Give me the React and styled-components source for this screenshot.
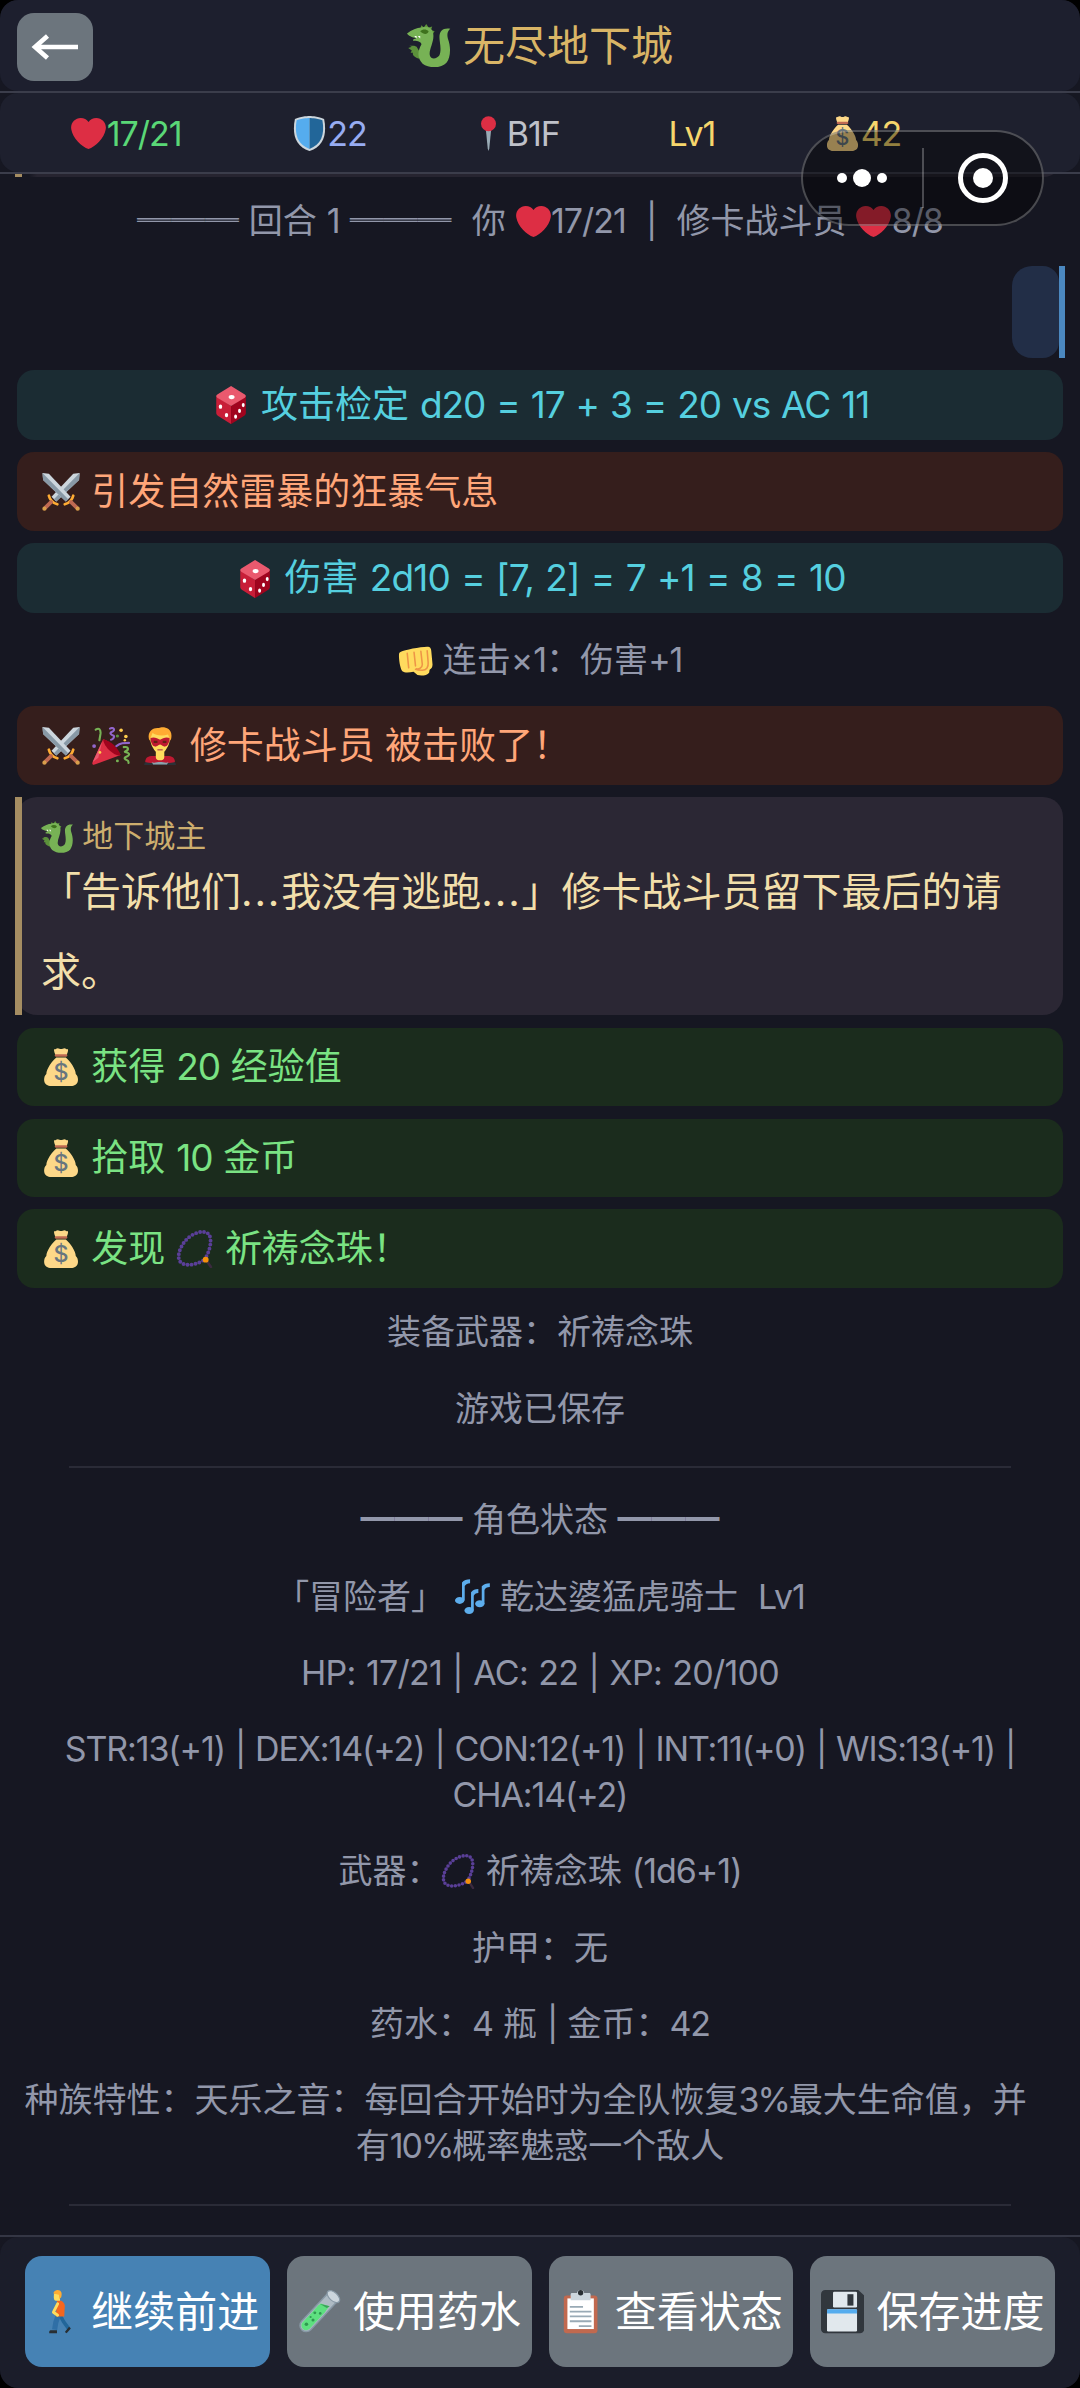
import React from "react";
import styled, { createGlobalStyle, css } from "styled-components";

const GlobalStyle = createGlobalStyle`
  * {
    box-sizing: border-box;
  }
  body {
    margin: 0;
    background: #000;
    font-family: Inter, "Noto Sans CJK SC", sans-serif;
  }
`;

//all emoji are drawn on a 36x36 grid
const emojis = {
  dragon: (
    <>
      <path
        fill="#5c913b"
        d="M11 4l1-3 2 2 2-3 2 3 3-1-1 3 3 1-2 3-6-3zM1 20l3-1-2-1 4 0 2 1 3 5-1 5c-3-1-6-3-5-5l-2 0 1-2z"
      />
      <path
        fill="#77b255"
        d="M0 8c4-3 8-5 12-5 6-2 10 1 10 7s-4 12-3 16c1 4 6 3 8 0 2-5 0-11 0-15 0-5 3-8 9-7-2 2-3 4-2 8 3 8 2 16-1 20-4 5-15 5-20 1-5-5-4-11-1-16 0-2-3-3-6-3-2 0-1-2 2-2-4-1-7-2-8-4z"
      />
      <path fill="#3e721d" d="M11 6c2-2 5-2 7 0-1 3-4 3-7 0z" />
      <path fill="#fff" d="M6 10h2v2zM9 10h2v2z" />
    </>
  ),
  heart: (
    <path
      fill="#dd2e44"
      d="M35.885 11.833c0-5.45-4.418-9.868-9.867-9.868-3.308 0-6.227 1.633-8.018 4.129-1.791-2.496-4.71-4.129-8.017-4.129-5.45 0-9.868 4.417-9.868 9.868 0 .772.098 1.52.266 2.241C1.751 22.587 11.216 31.568 18 34.034c6.783-2.466 16.249-11.447 17.617-19.959.17-.721.268-1.469.268-2.242z"
    />
  ),
  shield: (
    <>
      <path fill="#ccd6dd" d="M33 3c-7-3-15-3-15-3S10 0 3 3C0 18 3 31 18 36c15-5 18-18 15-33z" />
      <path fill="#55acee" d="M18 33.884C6.412 29.729 1.961 19.831 4.76 4.444 11.063 2.029 17.928 2 18 2z" />
      <path fill="#226699" d="M31.24 4.443C25.029 2.042 18.138 2 18 2v31.884c11.589-4.155 16.04-14.053 13.24-29.441z" />
    </>
  ),
  pin: (
    <>
      <path fill="#99aab5" d="M15.3 14h5.4l-1.9 19.500-.8 2.500-.8-2.500z" />
      <circle fill="#dd2e44" cx="18" cy="8" r="7.700" />
    </>
  ),
  bag: (
    <>
      <path
        fill="#fdd888"
        d="M31.900 24.600c0-4.600-5.600-12.600-9.400-15.600h-9c-3.800 3-9.400 11-9.400 15.600C2.500 26 2 28 2 30c0 4 3 6 7 6h18c4 0 7-2 7-6 0-2-.6-4-2.100-5.400z"
      />
      <path fill="#fdd888" d="M11.500 1c1 .8 2-.8 3.300-.8S16.800 1 18 1s2-.8 3.200-.8S23.500 1.800 24.500 1c.6 2-.8 4-1.200 6H12.700c-.4-2-1.800-4-1.200-6z" />
      <rect fill="#bf6952" x="12" y="6" width="12" height="2.200" rx="1.100" />
      <text x="18" y="30" textAnchor="middle" fontSize="22" fontWeight="500" fill="#67757f">
        $
      </text>
    </>
  ),
  dice: (
    <>
      <path fill="#c81e38" d="M4 9.500L18 19v17L5.500 28C4.300 27.200 4 26.500 4 25z" />
      <path fill="#a0041e" d="M32 9.500L18 19v17l12.500-8c1.200-.8 1.500-1.500 1.500-3z" />
      <path fill="#ea596e" d="M18 0l13 8c1.300.8 1.300 2 0 3l-13 8-13-8c-1.300-1-1.300-2.200 0-3z" />
      <ellipse fill="#fff" cx="18.500" cy="10.500" rx="2.800" ry="2" />
      <g fill="#fff">
        <ellipse cx="8" cy="19.500" rx="1.600" ry="2.100" />
        <ellipse cx="13.700" cy="27.500" rx="1.600" ry="2.100" />
        <ellipse cx="29.500" cy="18" rx="1.400" ry="2" />
        <ellipse cx="26" cy="23.500" rx="1.400" ry="2" />
        <ellipse cx="22.300" cy="29" rx="1.400" ry="2" />
      </g>
    </>
  ),
  swords: (
    <>
      {[false, true].map((flip) => (
        <g key={String(flip)} transform={flip ? "translate(36 0) scale(-1 1)" : undefined}>
          <path fill="#ccd6dd" d="M35.500 0l-6 .8L9 22.500l4.500 4.500L35 6.500z" />
          <path fill="#8899a6" d="M35.500 0L11.200 24.800l2.300 2.200L35 6.500z" />
          <path stroke="#ffac33" strokeWidth="2.600" strokeLinecap="round" d="M6.500 21.500c1 4 4 7 8 8" fill="none" />
          <path stroke="#bf6952" strokeWidth="3.600" strokeLinecap="round" d="M8.500 27.500L3.200 32.800" />
          <circle fill="#d99e4b" cx="2.300" cy="33.700" r="2" />
        </g>
      ))}
    </>
  ),
  fist: (
    <>
      <path
        fill="#ffdb5e"
        d="M3 9c4-2 24-6 29-5 1.500.5 2 2 2.200 4L35.500 22c0 3-1 4-3 5.500l-.5 3c-2 3-8 3.500-12 2.500l-4-3.500c-4 .8-9 1.500-11.500-.5C2 26 .8 16 1 12c0-1.500.6-2.500 2-3z"
      />
      <path
        d="M9.500 10.500l1.500 15M16.500 9.500l1.500 14M23.500 8.500L25 22c0 4-4 5-6 4.500M30 8l1 12c.5 5-2 8-6 8-3 0-5 0-7-1"
        fill="none"
        stroke="#ee9547"
        strokeWidth="1.600"
        strokeLinecap="round"
      />
    </>
  ),
  popper: (
    <>
      <path fill="#dd2e44" d="M10.500 11.500L.4 33.500C0 35 1 36 2.500 35.500L27 26.500C22 19 16 13 10.500 11.500z" />
      <path fill="#a0041e" d="M10.500 11.500c0 3 3 8 7 11.500 3 2.500 7 5 9.500 3.500-2-7-10-14-16.500-15z" />
      <path fill="#ea596e" d="M9.500 14L.7 33 6 29z" />
      <g fill="none" strokeWidth="2" strokeLinecap="round">
        <path stroke="#77b255" d="M3.500 2.500c3-2 5-.5 4.500 4l-1 6M30 19c5-1 5 3 1.500 4-2 1 4 .5 3.500 3s-5 2-4 4 4 0 3.500 4" />
        <path stroke="#9266cc" d="M17 1.500c4-2 5 2 2 3s-1 3 1 3.500 0 4-2 4M23 18c4-3 7-3 12-3" />
      </g>
      <g fill="#ffcc4d">
        <circle cx="27.500" cy="3" r="1.700" />
        <circle cx="32" cy="9" r="1.700" />
        <circle cx="7.500" cy="24" r="1.300" />
      </g>
      <circle fill="#9266cc" cx="2" cy="18" r="1.800" />
      <circle fill="#5c913b" cx="24" cy="8.500" r="1.500" />
      <circle fill="#77b255" cx="24" cy="32" r="1.400" />
      <circle fill="#ffcc4d" cx="31" cy="12.500" r="1.200" />
    </>
  ),
  hero: (
    <>
      <path fill="#2b3137" d="M3 36c0-2 1-3.500 3-3.500h24c2 0 3 1.500 3 3.500z" />
      <path fill="#be1931" d="M4 33c0-4 3-5.500 7-5.500h14c4 0 7 1.500 7 5.500-3 1.500-25 1.500-28 0z" />
      <path fill="#8ca3ad" d="M10 33c2 1.500 5 0 8 0s6 1.500 8 0l-1.500 2.500h-13z" />
      <path fill="#ffdc5d" d="M14 22h8v6.500c0 2-2 3-4 3s-4-1-4-3zM8.500 9c0-4 4-6.500 9.500-6.500S27.500 5 27.500 9c0 6-2 10-5 14-2 3-7 3-9 0-3-4-5-8-5-14z" />
      <path fill="#ffac33" d="M8 13C5 5 11 0 17 1c3-2 15-1 11 12l-2.500-6c-5 2-12 1-14.500-1.500z" />
      <path fill="#be1931" d="M9 10.500c3-1.500 6.500 0 9 1.500 2.500-1.500 6-3 9-1.500 0 5-2.500 8.500-5 8-2-.5-3-2-4-2s-2 1.500-4 2c-2.500.5-5-3-5-8z" />
      <path fill="#662113" d="M12 13h3.500v2H12zM20.500 13H24v2h-3.500z" />
      <path stroke="#c1694f" strokeWidth="1.500" d="M15.500 21.500h5" />
    </>
  ),
  beads: (
    <>
      <path
        d="M27 28C31 22 35 10 31 4 26-1 15 3 9 10 3 17 0 27 5 31c6 4 16 1 22-3z"
        fill="none"
        stroke="#5a3f98"
        strokeWidth="3.700"
        strokeLinecap="round"
        strokeDasharray="0 3.800"
      />
      <path stroke="#3b2a3f" strokeWidth="2.400" strokeLinecap="round" d="M29 29l4 6" />
      <circle fill="#f4900c" cx="28" cy="28" r="2.800" />
    </>
  ),
  notes: (
    <g fill="#5dadec">
      <ellipse cx="4.800" cy="22" rx="4.800" ry="3.600" />
      <path d="M7.200 22V3.500C9 1 12 .5 15.500.3v4c-2.500.2-4.500 1-5.500 3V22z" />
      <ellipse cx="14.500" cy="32.300" rx="4.800" ry="3.600" />
      <path d="M16.500 32V13.500c2-2.500 4-3 7.500-3.200v4c-2.500.2-4 1-4.700 3V32z" />
      <ellipse cx="25.500" cy="25.500" rx="4.800" ry="3.600" />
      <path d="M27.500 26V7.500c2-2.500 4.500-3 8.300-3.200v4c-2.800.2-4.800 1-5.500 3V26z" />
    </g>
  ),
  walk: (
    <>
      <path stroke="#226699" strokeWidth="3" d="M20 21l3 5.500 4.500 6" fill="none" />
      <path stroke="#2f6fa6" strokeWidth="4.300" d="M18.500 21l-2 6-1 6" fill="none" />
      <path fill="#292f33" d="M12 33.500h5.500V36H11c0-1.500 0-2 1-2.500zM27.500 30.500l1.500 1.500-3.500 4-1.500-1z" />
      <path fill="#f4661e" d="M17.500 9c3-1 5.500 0 6.500 4l-.5 9h-7z" />
      <path stroke="#ffdc5d" strokeWidth="2.400" strokeLinecap="round" strokeLinejoin="round" fill="none" d="M18 11.500l-3.500 7 3.500 2.500" />
      <path fill="#ffdc5d" d="M15 3h5v6h-3.500c-1.500 0-2-2-1.500-6z" />
      <path fill="#ffac33" d="M14.500 3c0-2 2-3 3.500-3 3 0 4 2.500 3 6l-1.500 1.500L19 4z" />
    </>
  ),
  tube: (
    <>
      <path stroke="#8899a6" strokeWidth="11.500" strokeLinecap="round" d="M6.800 29.500L27.500 7.500" />
      <path stroke="#aebbc4" strokeWidth="9" strokeLinecap="round" d="M6.800 29.500L27.500 7.500" />
      <path stroke="#5ee080" strokeWidth="8" strokeLinecap="round" d="M6.800 29.500L19 16.500" />
      <path fill="#5ee080" d="M16 13.500l3-2.300 7 2.300-4 5.500z" />
      <path fill="#3aa35a" d="M18 11.500l8.500 2-2.500 1.500z" />
      <ellipse cx="29.500" cy="5.500" rx="6.300" ry="3.500" transform="rotate(43 29.500 5.500)" fill="#ccd6dd" stroke="#8899a6" />
      <g fill="#2f9a50">
        <circle cx="7" cy="28.500" r="1.500" />
        <circle cx="12.500" cy="25" r="1.300" />
        <circle cx="10.500" cy="22.500" r=".9" />
        <circle cx="14" cy="19" r="1.200" />
        <circle cx="18.500" cy="19.500" r="1.100" />
      </g>
    </>
  ),
  clipboard: (
    <>
      <rect fill="#c1694f" x="4" y="4.500" width="28" height="31.500" rx="2.500" />
      <path fill="#fff" d="M7 7h22v25.500H7z" />
      <path fill="#ccd6dd" d="M11 2.500h14c1 0 1.300.5 1.300 1.500v4.500H9.700V4c0-1 .3-1.500 1.300-1.500z" />
      <circle fill="#ccd6dd" cx="18" cy="3" r="3" />
      <circle fill="#292f33" cx="18" cy="2.300" r="2.200" />
      <path stroke="#99aab5" strokeWidth="1.500" d="M9 14h11M9 18h18M9 22h18M9 26h18M16.500 30H27" />
    </>
  ),
  floppy: (
    <>
      <path fill="#31373d" d="M3.500 0H31l5 4.500v28c0 2-1.500 3.500-3.500 3.500h-29C1.500 36 0 34.500 0 32.500v-29C0 1.500 1.500 0 3.500 0z" />
      <rect fill="#e1e8ed" x="10" y="1.500" width="20" height="13" rx="1" />
      <rect fill="#31373d" x="22" y="3.500" width="5" height="9.500" />
      <rect fill="#e1e8ed" x="5" y="16" width="25" height="18.500" rx="1" />
      <path fill="#55acee" d="M5 17c0-.6.4-1 1-1h23c.6 0 1 .4 1 1v2.500H5z" />
    </>
  ),
};

const EmojiSvg = styled.svg`
  width: 1.03em;
  height: 1.03em;
  margin: 0 0.01em;
  vertical-align: -0.17em;
`;

//latin glyphs sit a little tighter than the chinese ones around them
const Latin = styled.span`
  letter-spacing: ${(props) => props.$tracking}em;
  word-spacing: 0.045em;
`;

const Emoji = ({ name }) => <EmojiSvg viewBox="0 0 36 36">{emojis[name]}</EmojiSvg>;

//"{name}" turns into an emoji, ascii runs get the tighter spacing
const RichText = ({ text, tracking = -0.03 }) =>
  text.split(/(\{[a-z]+\}|[\x20-\x7a|]+)/).map((part, i) => {
    if (part.startsWith("{")) return <Emoji key={i} name={part.slice(1, -1)} />;
    if (part !== " " && /^[\x20-\x7c]+$/.test(part)) {
      return (
        <Latin key={i} $tracking={tracking}>
          {part}
        </Latin>
      );
    }
    return part;
  });

const Page = styled.div`
  position: relative;
  display: flex;
  flex-direction: column;
  width: 1080px;
  height: 2388px;
  overflow: hidden;
  background-color: #161722;
  border-radius: 18px;
  white-space: pre-wrap;
`;

const Header = styled.header`
  height: 93px;
  border-bottom: 2px solid #3b3d4b;
`;

const HeaderInner = styled.div`
  display: grid;
  grid-template-columns: 76px 1fr 76px;
  align-items: center;
  height: 91px;
  padding: 0 17px;
  border-radius: 18px;
  background-color: #1d1f2e;
`;

const BackButton = styled.button`
  display: flex;
  align-items: center;
  justify-content: center;
  width: 76px;
  height: 68px;
  margin-top: 3px;
  padding: 0;
  border: none;
  border-radius: 17px;
  background-color: #6c757d;
`;

const Title = styled.h1`
  margin: 0;
  font-size: 42px;
  font-weight: 400;
  line-height: 60px;
  text-align: center;
  color: #d9b566;
`;

const StatusBar = styled.div`
  height: 81px;
  border-bottom: 2px solid #3b3d4b;
`;

const StatusInner = styled.div`
  display: flex;
  align-items: center;
  gap: 105.500px;
  height: 79px;
  padding: 2px 0 0 71px;
  border-radius: 18px;
  background-color: #1e202e;
`;

const Status = styled.div`
  width: ${(props) => props.$width}px;
  font-size: 34px;
  line-height: 46px;
  white-space: nowrap;
  color: ${(props) => props.$color};
`;

const Log = styled.main`
  display: flex;
  flex: 1;
  flex-direction: column;
  gap: 12.300px;
  padding: 0 17px;
`;

//the last few pixels of the message scrolled under the status bar
const Scrolled = styled.div`
  display: flex;
  flex-direction: column;
  justify-content: flex-end;
  height: 3px;
  overflow: hidden;
  margin: 0 0 0 -2px;
`;

const ScrolledCard = styled.div`
  flex: none;
  height: 40px;
  border-radius: 0 0 20px 0;
  background: linear-gradient(to right, #a58d62 7px, #161722 7px 14px, #262430 22px);
`;

const Notice = styled.div`
  padding: ${(props) => (props.$height ? (props.$height - 46) / 2 : 9)}px 0;
  font-size: 34px;
  line-height: 46px;
  text-align: center;
  color: #9297aa;
`;

const Line = styled.div`
  white-space: pre;
`;

const PlayerBubble = styled.div`
  align-self: flex-end;
  width: 53px;
  height: 92px;
  margin-right: -2px;
  background: linear-gradient(#4b88c0, #4b88c0) right / 6px 100% no-repeat;
  &::before {
    content: "";
    display: block;
    width: 47px;
    height: 92px;
    border-radius: 20px 16px 16px 20px;
    background-color: #222e47;
  }
`;

const variants = {
  dice: css`
    height: 70px;
    justify-content: center;
    background-color: #1b2c33;
    color: #55cfdf;
  `,
  fight: css`
    height: 79px;
    background-color: #351e1c;
    color: #ffa679;
  `,
  loot: css`
    height: 78.600px;
    background-color: #1b2c1d;
    color: #7ae383;
  `,
};

const Message = styled.div`
  display: flex;
  align-items: center;
  padding: 0 24px 0 25px;
  border-radius: 17px;
  font-size: 37px;
  line-height: 50px;
  ${(props) => variants[props.$variant]}
`;

const MasterCard = styled.section`
  position: relative;
  height: 218px;
  padding: 19px 24px 0;
  border-radius: 20px;
  background-color: #2b2734;
  &::before {
    content: "";
    position: absolute;
    top: 0;
    bottom: 0;
    left: -2px;
    width: 7px;
    background-color: #a58d62;
  }
`;

const MasterName = styled.div`
  font-size: 31px;
  line-height: 40px;
  color: #cdae6e;
`;

const MasterText = styled.p`
  margin: -4px 0 0;
  font-size: 40px;
  line-height: 80px;
  color: #f2dfab;
`;

//three dots take exactly one chinese character
const Ellipsis = styled.span`
  letter-spacing: 1.900px;
`;

const Divider = styled.hr`
  width: 942px;
  height: 2px;
  margin: 13px auto 8px;
  border: none;
  background-color: #2a2b37;
`;

const Footer = styled.footer`
  height: 153px;
  border-top: 2px solid #343644;
`;

const FooterInner = styled.div`
  display: grid;
  grid-template-columns: repeat(4, 1fr);
  gap: 17px;
  height: 151px;
  padding: 19px 25px 21px;
  border-radius: 18px;
  background-color: #1b1d2a;
`;

const ActionButton = styled.button`
  padding: 0;
  border: none;
  border-radius: 17px;
  background-color: ${(props) => (props.$primary ? "#4682b4" : "#6c757d")};
  color: #fff;
  font-family: inherit;
  font-size: 42px;
  line-height: 60px;
  white-space: nowrap;
`;

//floats above everything, the log shows through it
const Capsule = styled.div`
  position: absolute;
  top: 130px;
  left: 801px;
  display: flex;
  align-items: center;
  width: 243px;
  height: 96px;
  border: 2.500px solid rgba(255, 255, 255, 0.250);
  border-radius: 48px;
  background-color: rgba(0, 0, 0, 0.400);
`;

const CapsuleHalf = styled.div`
  display: flex;
  flex: 1;
  align-items: center;
  justify-content: center;
  gap: 6px;
`;

const CapsuleLine = styled.div`
  width: 2px;
  height: 60px;
  background-color: rgba(255, 255, 255, 0.250);
`;

const Dot = styled.div`
  width: ${(props) => props.$size}px;
  height: ${(props) => props.$size}px;
  border-radius: 50%;
  background-color: #fff;
`;

const Ring = styled.div`
  display: flex;
  align-items: center;
  justify-content: center;
  width: 50px;
  height: 50px;
  border: 5px solid #fff;
  border-radius: 50%;
`;

const statuses = [
  { text: "{heart}17/21", color: "#5ad877", width: 115 },
  { text: "{shield}22", color: "#97acf2", width: 74 },
  { text: "{pin}B1F", color: "#bfc1c9", width: 92 },
  { text: "Lv1", color: "#f6d66c", width: 51 },
  { text: "{bag}42", color: "#f6d66c", width: 76 },
];

const sheet = [
  { lines: ["━━━ 角色状态 ━━━"] },
  { lines: ["「冒险者」 {notes} 乾达婆猛虎骑士  Lv1"] },
  { lines: ["HP: 17/21 | AC: 22 | XP: 20/100"], tracking: -0.022 },
  {
    lines: ["STR:13(+1) | DEX:14(+2) | CON:12(+1) | INT:11(+0) | WIS:13(+1) |", "CHA:14(+2)"],
    tracking: -0.033,
  },
  { lines: ["武器：{beads} 祈祷念珠 (1d6+1)"] },
  { lines: ["护甲：无"] },
  { lines: ["药水：4 瓶 | 金币：42"] },
  {
    lines: ["种族特性：天乐之音：每回合开始时为全队恢复3%最大生命值，并\u00a0\u00a0\u00a0", "有10%概率魅惑一个敌人"],
    tracking: -0.06,
  },
];

const actions = ["{walk} 继续前进", "{tube} 使用药水", "{clipboard} 查看状态", "{floppy} 保存进度"];

const App = () => {
  return (
    <>
      <GlobalStyle />
      <Page>
        <Header>
          <HeaderInner>
            <BackButton>
              <svg width="48" height="26" viewBox="0 0 48 26" fill="none" stroke="#fff" strokeWidth="4.600">
                <path d="M4 13h43M16.500 2L4 13l12.500 11" />
              </svg>
            </BackButton>
            <Title>
              <RichText text="{dragon} 无尽地下城" />
            </Title>
          </HeaderInner>
        </Header>
        <StatusBar>
          <StatusInner>
            {statuses.map((status) => (
              <Status key={status.text} $color={status.color} $width={status.width}>
                <RichText text={status.text} />
              </Status>
            ))}
          </StatusInner>
        </StatusBar>
        <Log>
          <Scrolled>
            <ScrolledCard />
          </Scrolled>
          <Notice>
            <RichText text="═══ 回合 1 ═══  你 {heart}17/21  |  修卡战斗员 {heart}8/8" />
          </Notice>
          <PlayerBubble />
          <Message $variant="dice">
            <span>
              <RichText text="{dice} 攻击检定 d20 = 17 + 3 = 20 vs AC 11" tracking={-0.029} />
            </span>
          </Message>
          <Message $variant="fight">
            <span>
              <RichText text="{swords} 引发自然雷暴的狂暴气息" />
            </span>
          </Message>
          <Message $variant="dice">
            <span>
              <RichText text="{dice} 伤害 2d10 = [7, 2] = 7 +1 = 8 = 10" tracking={-0.023} />
            </span>
          </Message>
          <Notice $height={68}>
            <RichText text="{fist} 连击×1：伤害+1" />
          </Notice>
          <Message $variant="fight">
            <span>
              <RichText text="{swords} {popper} {hero} 修卡战斗员 被击败了！" />
            </span>
          </Message>
          <MasterCard>
            <MasterName>
              <RichText text="{dragon} 地下城主" />
            </MasterName>
            <MasterText>
              「告诉他们<Ellipsis>...</Ellipsis>我没有逃跑<Ellipsis>...</Ellipsis>」修卡战斗员留下最后的请
              <br />
              求。
            </MasterText>
          </MasterCard>
          <Message $variant="loot">
            <span>
              <RichText text="{bag} 获得 20 经验值" />
            </span>
          </Message>
          <Message $variant="loot">
            <span>
              <RichText text="{bag} 拾取 10 金币" />
            </span>
          </Message>
          <Message $variant="loot">
            <span>
              <RichText text="{bag} 发现 {beads} 祈祷念珠！" />
            </span>
          </Message>
          <Notice>装备武器：祈祷念珠</Notice>
          <Notice>游戏已保存</Notice>
          <Divider />
          {sheet.map((row) => (
            <Notice key={row.lines[0]}>
              {row.lines.map((line) => (
                <Line key={line}>
                  <RichText text={line} tracking={row.tracking} />
                </Line>
              ))}
            </Notice>
          ))}
          <Divider />
        </Log>
        <Footer>
          <FooterInner>
            {actions.map((action, i) => (
              <ActionButton key={action} $primary={i === 0}>
                <RichText text={action} />
              </ActionButton>
            ))}
          </FooterInner>
        </Footer>
        <Capsule>
          <CapsuleHalf>
            <Dot $size={10} />
            <Dot $size={18} />
            <Dot $size={10} />
          </CapsuleHalf>
          <CapsuleLine />
          <CapsuleHalf>
            <Ring>
              <Dot $size={20} />
            </Ring>
          </CapsuleHalf>
        </Capsule>
      </Page>
    </>
  );
};

export default App;
